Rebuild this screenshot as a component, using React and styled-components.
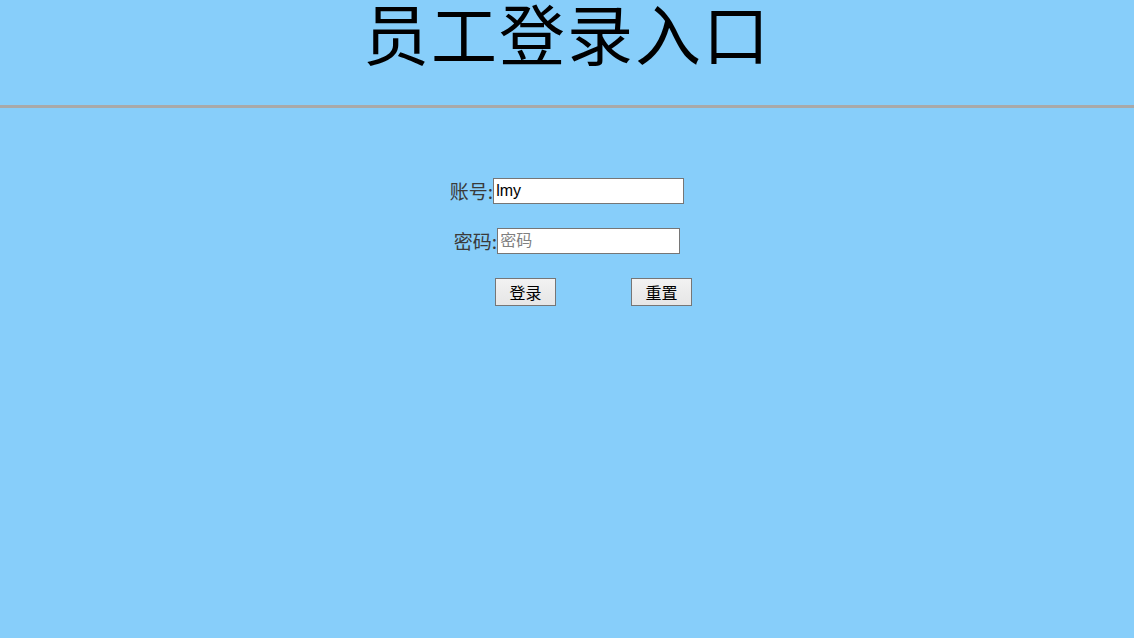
import React, { useState } from 'react';
import styled, { createGlobalStyle } from 'styled-components';

const GlobalStyle = createGlobalStyle`
  html, body {
    margin: 0;
    padding: 0;
    background: #87cefa;
  }
  body {
    font-family: "Liberation Serif", "Noto Sans CJK SC", serif;
  }
`;

const Page = styled.div`
  min-height: 638px;
  background: #87cefa;
`;

const Header = styled.header`
  height: 105px;
  border-bottom: 3px solid #a9a9a9;
  box-sizing: content-box;
  display: flex;
  justify-content: center;
`;

const Title = styled.h1`
  margin: 0;
  font-family: "Liberation Serif", "Noto Sans CJK SC", serif;
  font-size: 66px;
  font-weight: 400;
  line-height: 76px;
  letter-spacing: 2px;
  color: #000;
`;

const Form = styled.form`
  display: flex;
  flex-direction: column;
  align-items: center;
  padding-top: 70px;
  gap: 24px;
`;

const Row = styled.div`
  display: flex;
  align-items: center;
  justify-content: center;
  height: 26px;
`;

const Label = styled.label`
  font-family: "Noto Sans CJK SC", sans-serif;
  font-size: 19px;
  line-height: 24px;
  color: #3a3a3a;
`;

const Input = styled.input`
  box-sizing: border-box;
  width: ${(p) => p.$width}px;
  height: 26px;
  margin: 0;
  padding: 1px 2px;
  border: 1px solid #767676;
  background: #fff;
  font-family: "Liberation Sans", "Noto Sans CJK SC", sans-serif;
  font-size: 16px;
  color: #000;
  outline: none;

  &::placeholder {
    color: #808080;
  }
`;

const ButtonRow = styled.div`
  display: flex;
  justify-content: center;
  gap: 75px;
  padding-left: 53px;
`;

const Button = styled.button`
  box-sizing: border-box;
  width: 61px;
  height: 28px;
  margin: 0;
  padding: 0;
  border: 1px solid #767676;
  background: linear-gradient(#f2f2f2, #e6e6e6);
  font-family: "Noto Sans CJK SC", sans-serif;
  font-size: 16px;
  color: #000;
  cursor: pointer;
`;

export default function App() {
  const [account, setAccount] = useState('lmy');
  const [password, setPassword] = useState('');

  return (
    <Page>
      <GlobalStyle />
      <Header>
        <Title>员工登录入口</Title>
      </Header>
      <Form onSubmit={(e) => e.preventDefault()}>
        <Row>
          <Label htmlFor="account">账号:</Label>
          <Input
            id="account"
            $width={191}
            value={account}
            onChange={(e) => setAccount(e.target.value)}
          />
        </Row>
        <Row>
          <Label htmlFor="password">密码:</Label>
          <Input
            id="password"
            type="password"
            $width={183}
            placeholder="密码"
            value={password}
            onChange={(e) => setPassword(e.target.value)}
          />
        </Row>
        <ButtonRow>
          <Button type="submit">登录</Button>
          <Button type="reset" onClick={() => setPassword('')}>
            重置
          </Button>
        </ButtonRow>
      </Form>
    </Page>
  );
}
